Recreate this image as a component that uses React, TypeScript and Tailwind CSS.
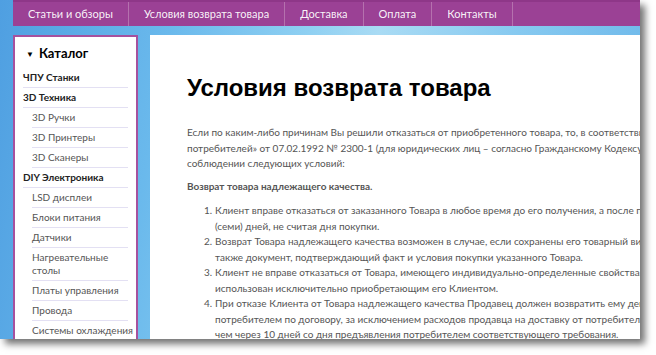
import React from 'react';

const navItems = ['Статьи и обзоры', 'Условия возврата товара', 'Доставка', 'Оплата', 'Контакты'];

type CatItem = { label: string; bold?: boolean; sub?: boolean };

const catalog: CatItem[] = [
  { label: 'ЧПУ Станки', bold: true },
  { label: '3D Техника', bold: true },
  { label: '3D Ручки', sub: true },
  { label: '3D Принтеры', sub: true },
  { label: '3D Сканеры', sub: true },
  { label: 'DIY Электроника', bold: true },
  { label: 'LSD дисплеи', sub: true },
  { label: 'Блоки питания', sub: true },
  { label: 'Датчики', sub: true },
  { label: 'Нагревательные столы', sub: true },
  { label: 'Платы управления', sub: true },
  { label: 'Провода', sub: true },
  { label: 'Системы охлаждения', sub: true },
];

const rules: string[][] = [
  [
    'Клиент вправе отказаться от заказанного Товара в любое время до его получения, а после получения — в течение 7',
    '(семи) дней, не считая дня покупки.',
  ],
  [
    'Возврат Товара надлежащего качества возможен в случае, если сохранены его товарный вид, потребительские свойства, а',
    'также документ, подтверждающий факт и условия покупки указанного Товара.',
  ],
  [
    'Клиент не вправе отказаться от Товара, имеющего индивидуально-определенные свойства, если указанный Товар может быть',
    'использован исключительно приобретающим его Клиентом.',
  ],
  [
    'При отказе Клиента от Товара надлежащего качества Продавец должен возвратить ему денежную сумму, уплаченную',
    'потребителем по договору, за исключением расходов продавца на доставку от потребителя возвращенного товара, не позднее',
    'чем через 10 дней со дня предъявления потребителем соответствующего требования.',
  ],
];

const Sidebar = () => (
  <aside className="w-[125px] shrink-0 bg-white border-2 border-b-0 border-[#a6519e] pl-[8px] pr-[8px] pt-[7px]">
    <div className="flex items-center gap-[5px] pl-[3px] pb-[4px] text-[13px] font-bold text-black">
      <span className="text-[8px] leading-none">▼</span>
      <span>Каталог</span>
    </div>
    <ul className="text-[10px] leading-[13px]">
      {catalog.map((item) => (
        <li
          key={item.label}
          className={`border-b border-[#e3e0f3] py-[3px] whitespace-nowrap ${item.sub ? 'ml-[9px] text-[#555]' : 'text-[#222] font-bold'}`}
        >
          {item.label === 'Нагревательные столы' ? (
            <>
              Нагревательные
              <br />
              столы
            </>
          ) : (
            item.label
          )}
        </li>
      ))}
    </ul>
  </aside>
);

const App = () => {
  return (
    <div className="w-[656px] h-[355px] bg-white overflow-hidden">
      <div
        className="w-[640px] h-[339px] overflow-hidden shadow-[5px_5px_7px_rgba(0,0,0,0.55)] bg-[linear-gradient(100deg,#4f9fe1_0%,#6ab9ec_25%,#8fd0f2_45%,#a9dbf4_55%,#86c9f0_75%,#69b5e9_100%)]"
        style={{ fontFamily: 'Lato, "Open Sans", sans-serif' }}
      >
        <nav className="ml-[13px] h-[26px] flex bg-[#9b4195] border-t-2 border-[#8e3788]">
          {navItems.map((item) => (
            <div
              key={item}
              className="px-[15px] flex items-center text-[11px] text-white/95 border-r border-[#b571ae]"
            >
              {item}
            </div>
          ))}
        </nav>
        <div className="flex gap-[12px] ml-[13px] mt-[9px] h-[320px]">
          <Sidebar />
          <main className="w-[600px] shrink-0 bg-white pl-[37px] pt-[38px] text-[#555] text-[10px] leading-[15.5px] whitespace-nowrap">
            <h1
              className="text-[24px] font-bold text-black leading-[30px] mb-[22px]"
              style={{ fontFamily: '"Liberation Sans", Arial, sans-serif' }}
            >
              Условия возврата товара
            </h1>
            <p className="mb-[7px]">
              Если по каким-либо причинам Вы решили отказаться от приобретенного товара, то, в соответствии с Законом РФ «О защите прав
              <br />
              потребителей» от 07.02.1992 № 2300-1 (для юридических лиц – согласно Гражданскому Кодексу РФ), Вы можете вернуть товар при
              <br />
              соблюдении следующих условий:
            </p>
            <p className="font-bold mb-[9px]">Возврат товара надлежащего качества.</p>
            <ol className="pl-[17px]">
              {rules.map((lines, i) => (
                <li key={i} className="flex">
                  <span className="w-[11px] shrink-0">{i + 1}.</span>
                  <span>
                    {lines.map((line, j) => (
                      <React.Fragment key={j}>
                        {j > 0 && <br />}
                        {line}
                      </React.Fragment>
                    ))}
                  </span>
                </li>
              ))}
            </ol>
          </main>
        </div>
      </div>
    </div>
  );
};

export default App;
